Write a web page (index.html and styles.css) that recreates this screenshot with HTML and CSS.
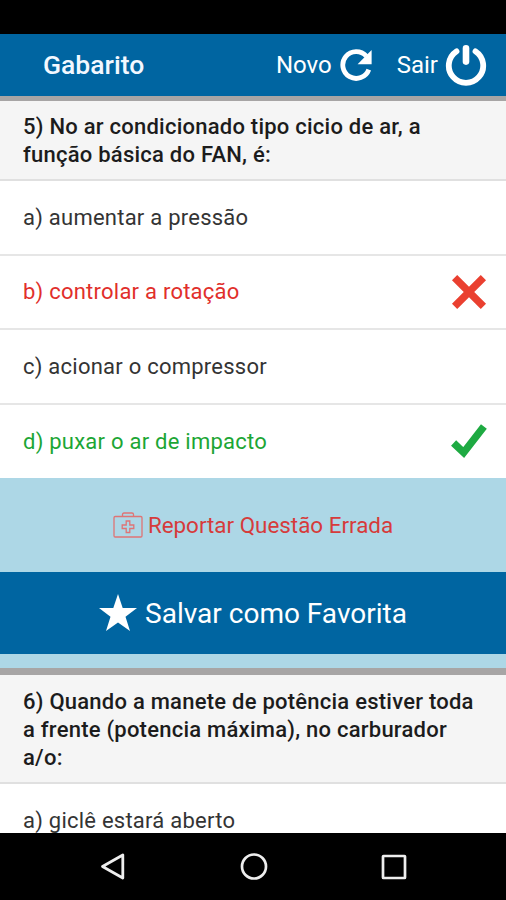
FILE: index.html
```html
<!DOCTYPE html>
<html lang="pt-BR">
<head>
<meta charset="utf-8">
<title>Gabarito</title>
<link rel="stylesheet" href="styles.css">
</head>
<body>
<div class="status-bar"></div>
<header class="toolbar">
  <h1 class="title">Gabarito</h1>
  <div class="action action-new"><span>Novo</span>
    <svg width="34" height="34" viewBox="0 0 34 34"><path d="M27.3 8.2A13.4 13.4 0 1 0 29.8 21.6" fill="none" stroke="#fff" stroke-width="4.8"/><path d="M32.6 2V16.2H18.6Z" fill="#fff"/></svg>
  </div>
  <div class="action action-exit"><span>Sair</span>
    <svg width="42" height="42" viewBox="0 0 42 42"><path d="M11.5 7.3A17.2 17.2 0 1 0 30.5 7.3" fill="none" stroke="#fff" stroke-width="5.8" stroke-linecap="round"/><path d="M21 4.4V17.6" stroke="#fff" stroke-width="6.6" stroke-linecap="round"/></svg>
  </div>
</header>
<main class="content">
  <section class="card first">
    <h2 class="question">5) No ar condicionado tipo cicio de ar, a<br>função básica do FAN, é:</h2>
    <div class="option"><span>a) aumentar a pressão</span></div>
    <div class="option wrong"><span>b) controlar a rotação</span>
      <svg width="36" height="36" viewBox="0 0 36 36"><path d="M3.6 3.6L32.4 32.4M32.4 3.6L3.6 32.4" stroke="#ea4030" stroke-width="7.4"/></svg>
    </div>
    <div class="option"><span>c) acionar o compressor</span></div>
    <div class="option right"><span>d) puxar o ar de impacto</span>
      <svg width="36" height="36" viewBox="0 0 36 36"><path d="M2.6 20L12.7 29.6L32.9 3.6" fill="none" stroke="#1eaa42" stroke-width="7.4"/></svg>
    </div>
    <div class="report">
      <svg width="30" height="28" viewBox="0 0 30 28" fill="none" stroke="#df7475" stroke-width="1.3"><rect x="1" y="5.5" width="28" height="20.5" rx="1.2"/><path d="M9.5 5V3.5Q9.5 2 11 2H19Q20.500 2 20.500 3.500V5"/><path d="M13.200 10H16.800V14H20.800V17.500H16.800V21.500H13.200V17.500H9.200V14H13.200Z"/></svg>
      <span>Reportar Questão Errada</span>
    </div>
    <div class="favorite">
      <svg width="38" height="38" viewBox="0 0 38 38"><path d="M19 0L23.7 14H38L26.5 22.8L31 37L19 28.5L7 37L11.5 22.8L0 14H14.3Z" fill="#fff"/></svg>
      <span>Salvar como Favorita</span>
    </div>
  </section>
  <section class="card second">
    <h2 class="question">6) Quando a manete de potência estiver toda<br>a frente (potencia máxima), no carburador<br>a/o:</h2>
    <div class="option"><span>a) giclê estará aberto</span></div>
  </section>
</main>
<nav class="navbar">
  <svg width="26" height="30" viewBox="0 0 26 30"><path d="M2.500 14.500L22.800 3V26Z" fill="none" stroke="#eee" stroke-width="2.800" stroke-linejoin="round"/></svg>
  <svg width="30" height="30" viewBox="0 0 30 30"><circle cx="15" cy="14.500" r="12" fill="none" stroke="#eee" stroke-width="2.700"/></svg>
  <svg width="26" height="30" viewBox="0 0 26 30"><rect x="2" y="4" width="22" height="22" rx=".5" fill="none" stroke="#eee" stroke-width="2.700"/></svg>
</nav>
</body>
</html>
```
FILE: styles.css
```css
* { box-sizing: border-box; }
body { margin: 0; width: 506px; height: 900px; overflow: hidden; display: flex; flex-direction: column; background: #fff; font-family: Roboto, sans-serif; color: #343434; }
svg { display: block; flex: none; }
.status-bar { height: 34px; background: #000; flex: none; }
.toolbar { height: 62px; flex: none; display: flex; align-items: center; padding: 0 19px 0 43px; background: #0065a1; color: #fff; }
.title { margin: 0; font-size: 26.5px; line-height: 30px; font-weight: 500; color: #f3f8ff; }
.action { display: flex; align-items: center; font-size: 24px; white-space: nowrap; }
.action-new { margin-left: auto; gap: 7px; }
.action-exit { margin-left: 24px; gap: 7px; }
.content { height: 737px; flex: none; overflow: hidden; }
.card { border-top: 5px solid #a7a5a5; }
.second { border-top-width: 7px; }
.question { margin: 0; padding: 12px 0 0 23px; height: 80px; background: #f5f5f5; font-size: 22px; line-height: 28px; font-weight: 500; color: #1c1c1c; border-bottom: 2px solid #e0e0e0; white-space: nowrap; letter-spacing: .24px; }
.second .question { height: 109px; padding-top: 13px; }
.option { height: 74.5px; padding: 2px 19px 2px 23px; display: flex; align-items: center; justify-content: space-between; border-bottom: 2px solid #e6e6e6; font-size: 22px; white-space: nowrap; letter-spacing: .24px; }
.wrong { color: #e12f2b; }
.right { color: #1ca635; border-bottom: 0; height: 73.5px; }
.report { height: 94px; background: #add7e6; color: #d63b3b; display: flex; align-items: center; justify-content: center; gap: 5px; font-size: 22.4px; }
.favorite { height: 82px; background: #0065a1; color: #fff; display: flex; align-items: center; justify-content: center; gap: 8px; font-size: 28px; }
.first { padding-bottom: 14px; background: #add7e6; }
.first .option { background: #fff; }
.navbar { height: 67px; flex: none; background: #000; display: flex; align-items: center; justify-content: space-between; padding: 0 99px 0 100px; }
```
